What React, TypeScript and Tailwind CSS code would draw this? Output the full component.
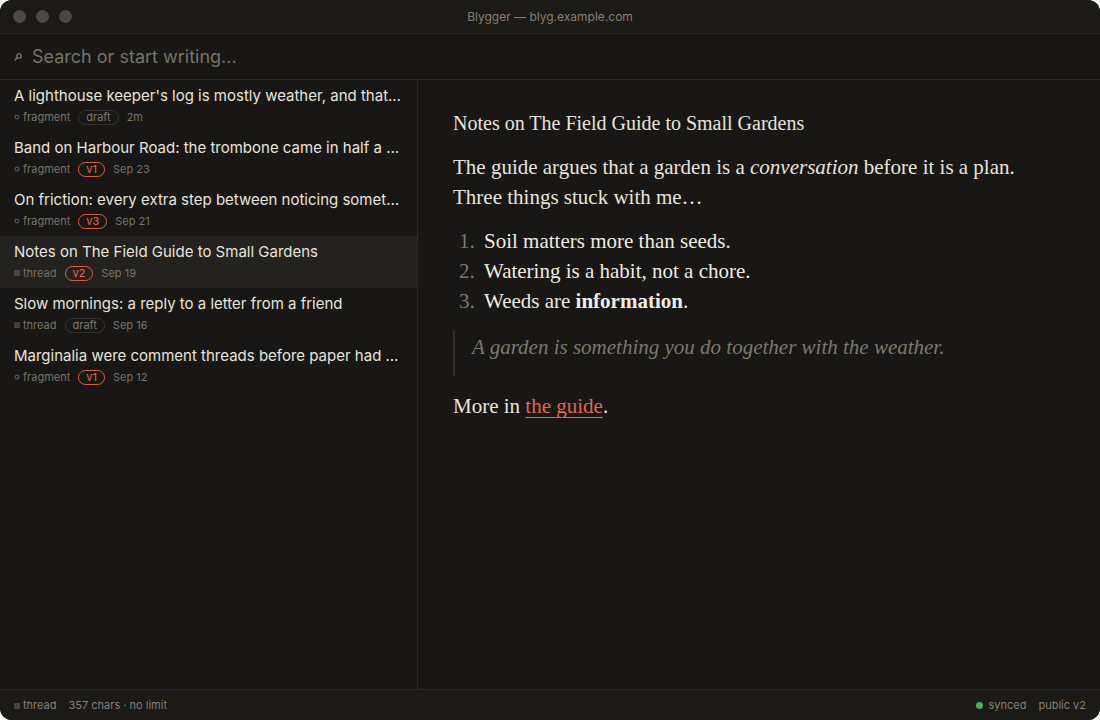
import { Fragment } from "react"

type Note = {
  title: string
  kind: "fragment" | "thread"
  badge: string
  date: string
  active?: boolean
}

const notes: Note[] = [
  { title: "A lighthouse keeper's log is mostly weather, and that is the point of it", kind: "fragment", badge: "draft", date: "2m" },
  { title: "Band on Harbour Road: the trombone came in half a bar early", kind: "fragment", badge: "v1", date: "Sep 23" },
  { title: "On friction: every extra step between noticing something and writing it down", kind: "fragment", badge: "v3", date: "Sep 21" },
  { title: "Notes on The Field Guide to Small Gardens", kind: "thread", badge: "v2", date: "Sep 19", active: true },
  { title: "Slow mornings: a reply to a letter from a friend", kind: "thread", badge: "draft", date: "Sep 16" },
  { title: "Marginalia were comment threads before paper had margins to spare", kind: "fragment", badge: "v1", date: "Sep 12" },
]

const sans = "font-['Inter','Liberation_Sans',sans-serif]"
const serif = "font-['Liberation_Serif','DejaVu_Serif',serif]"

function KindIcon({ kind }: { kind: Note["kind"] }) {
  if (kind === "thread") {
    return (
      <svg width="6" height="6" viewBox="0 0 6 6" className="mr-[3px]">
        <rect x="0" y="0.5" width="6" height="1" fill="#6f6a62" />
        <rect x="0" y="2.5" width="6" height="1" fill="#6f6a62" />
        <rect x="0" y="4.5" width="6" height="1" fill="#6f6a62" />
      </svg>
    )
  }
  return (
    <svg width="6" height="6" viewBox="0 0 6 6" className="mr-[3px]">
      <circle cx="3" cy="3" r="2" fill="none" stroke="#6f6a62" strokeWidth="0.9" />
    </svg>
  )
}

function Badge({ label }: { label: string }) {
  const draft = label === "draft"
  return (
    <span
      className={`inline-flex items-center h-[15px] px-[7px] rounded-full border text-[11px] leading-none ${
        draft ? "border-[#36342f] text-[#7d786f]" : "border-[#d9603f] text-[#e0694a]"
      }`}
    >
      {label}
    </span>
  )
}

export default function App() {
  return (
    <div className={`w-[1100px] h-[720px] bg-white ${sans}`}>
      <div className="w-full h-full rounded-[12px] overflow-hidden bg-[#181715] flex flex-col text-[#e6e2da]">
        {/* title bar */}
        <div className="relative h-[34px] shrink-0 flex items-center bg-[#1b1a17] border-b border-[#2a2925]">
          <div className="flex items-center gap-[10px] pl-[13px]">
            <span className="w-[13px] h-[13px] rounded-full bg-[#4b4946]" />
            <span className="w-[13px] h-[13px] rounded-full bg-[#4b4946]" />
            <span className="w-[13px] h-[13px] rounded-full bg-[#4b4946]" />
          </div>
          <div className="absolute inset-0 flex items-center justify-center text-[12px] text-[#857f76] pointer-events-none">
            Blygger — blyg.example.com
          </div>
        </div>

        {/* search */}
        <div className="h-[46px] shrink-0 flex items-center px-[14px] border-b border-[#2a2925] bg-[#181715]">
          <svg width="8" height="8" viewBox="0 0 8 8" className="mr-[10px] mt-[1px]">
            <circle cx="5" cy="3" r="2.2" fill="none" stroke="#8a857c" strokeWidth="1.1" />
            <line x1="3.4" y1="4.6" x2="1" y2="7" stroke="#8a857c" strokeWidth="1.2" strokeLinecap="round" />
          </svg>
          <span className="text-[18px] text-[#77726a]">Search or start writing...</span>
        </div>

        <div className="flex flex-1 min-h-0">
          {/* sidebar */}
          <div className="w-[418px] shrink-0 border-r border-[#2a2925] flex flex-col">
            {notes.map((n) => (
              <div
                key={n.title}
                className={`h-[52px] px-[14px] pt-[6px] flex flex-col ${n.active ? "bg-[#23221f]" : ""}`}
              >
                <div className="text-[15px] leading-[20px] text-[#e8e4dc] truncate">{n.title}</div>
                <div className="mt-[3px] flex items-center gap-[8px] text-[11px] text-[#77726a]">
                  <span className="inline-flex items-center">
                    <KindIcon kind={n.kind} />
                    {n.kind}
                  </span>
                  <Badge label={n.badge} />
                  <span>{n.date}</span>
                </div>
              </div>
            ))}
          </div>

          {/* editor */}
          <div className={`flex-1 pl-[35px] pr-[40px] pt-[30px] ${serif} text-[#e8e4dc]`}>
            <div className="max-w-[590px]">
              <h1 className="text-[20px] leading-[26px] mb-[16px]">Notes on The Field Guide to Small Gardens</h1>
              <p className="text-[21px] leading-[30px]">
                The guide argues that a garden is a <em>conversation</em> before it is a plan. Three things stuck with me…
              </p>
              <ol className="mt-[14px] text-[21px] leading-[30px]">
                {[
                  <Fragment key="1">Soil matters more than seeds.</Fragment>,
                  <Fragment key="2">Watering is a habit, not a chore.</Fragment>,
                  <Fragment key="3">
                    Weeds are <strong className="font-bold text-[#f2eee6]">information</strong>.
                  </Fragment>,
                ].map((item, i) => (
                  <li key={i} className="flex">
                    <span className="w-[31px] pl-[6px] text-[#7d786f]">{i + 1}.</span>
                    <span className="text-[#efebe3]">{item}</span>
                  </li>
                ))}
              </ol>
              <blockquote className="mt-[14px] border-l-2 border-[#2e2d29] pl-[17px] pt-[2px] pb-[14px] text-[21px] leading-[30px] italic text-[#7d786f]">
                A garden is something you do together with the weather.
              </blockquote>
              <p className="mt-[15px] text-[21px] leading-[30px]">
                More in{" "}
                <a className="text-[#e0694a] underline decoration-[#e0694a] underline-offset-[4px] decoration-1">the guide</a>.
              </p>
            </div>
          </div>
        </div>

        {/* status bar */}
        <div className="h-[31px] shrink-0 flex items-center justify-between px-[14px] pt-[1px] border-t border-[#2a2925] bg-[#1b1a17] text-[11px] text-[#857f76]">
          <div className="flex items-center gap-[12px]">
            <span className="inline-flex items-center">
              <KindIcon kind="thread" />
              thread
            </span>
            <span>357 chars · no limit</span>
          </div>
          <div className="flex items-center gap-[12px]">
            <span className="inline-flex items-center gap-[6px]">
              <span className="w-[7px] h-[7px] rounded-full bg-[#3fb55a]" />
              synced
            </span>
            <span>public v2</span>
          </div>
        </div>
      </div>
    </div>
  )
}
